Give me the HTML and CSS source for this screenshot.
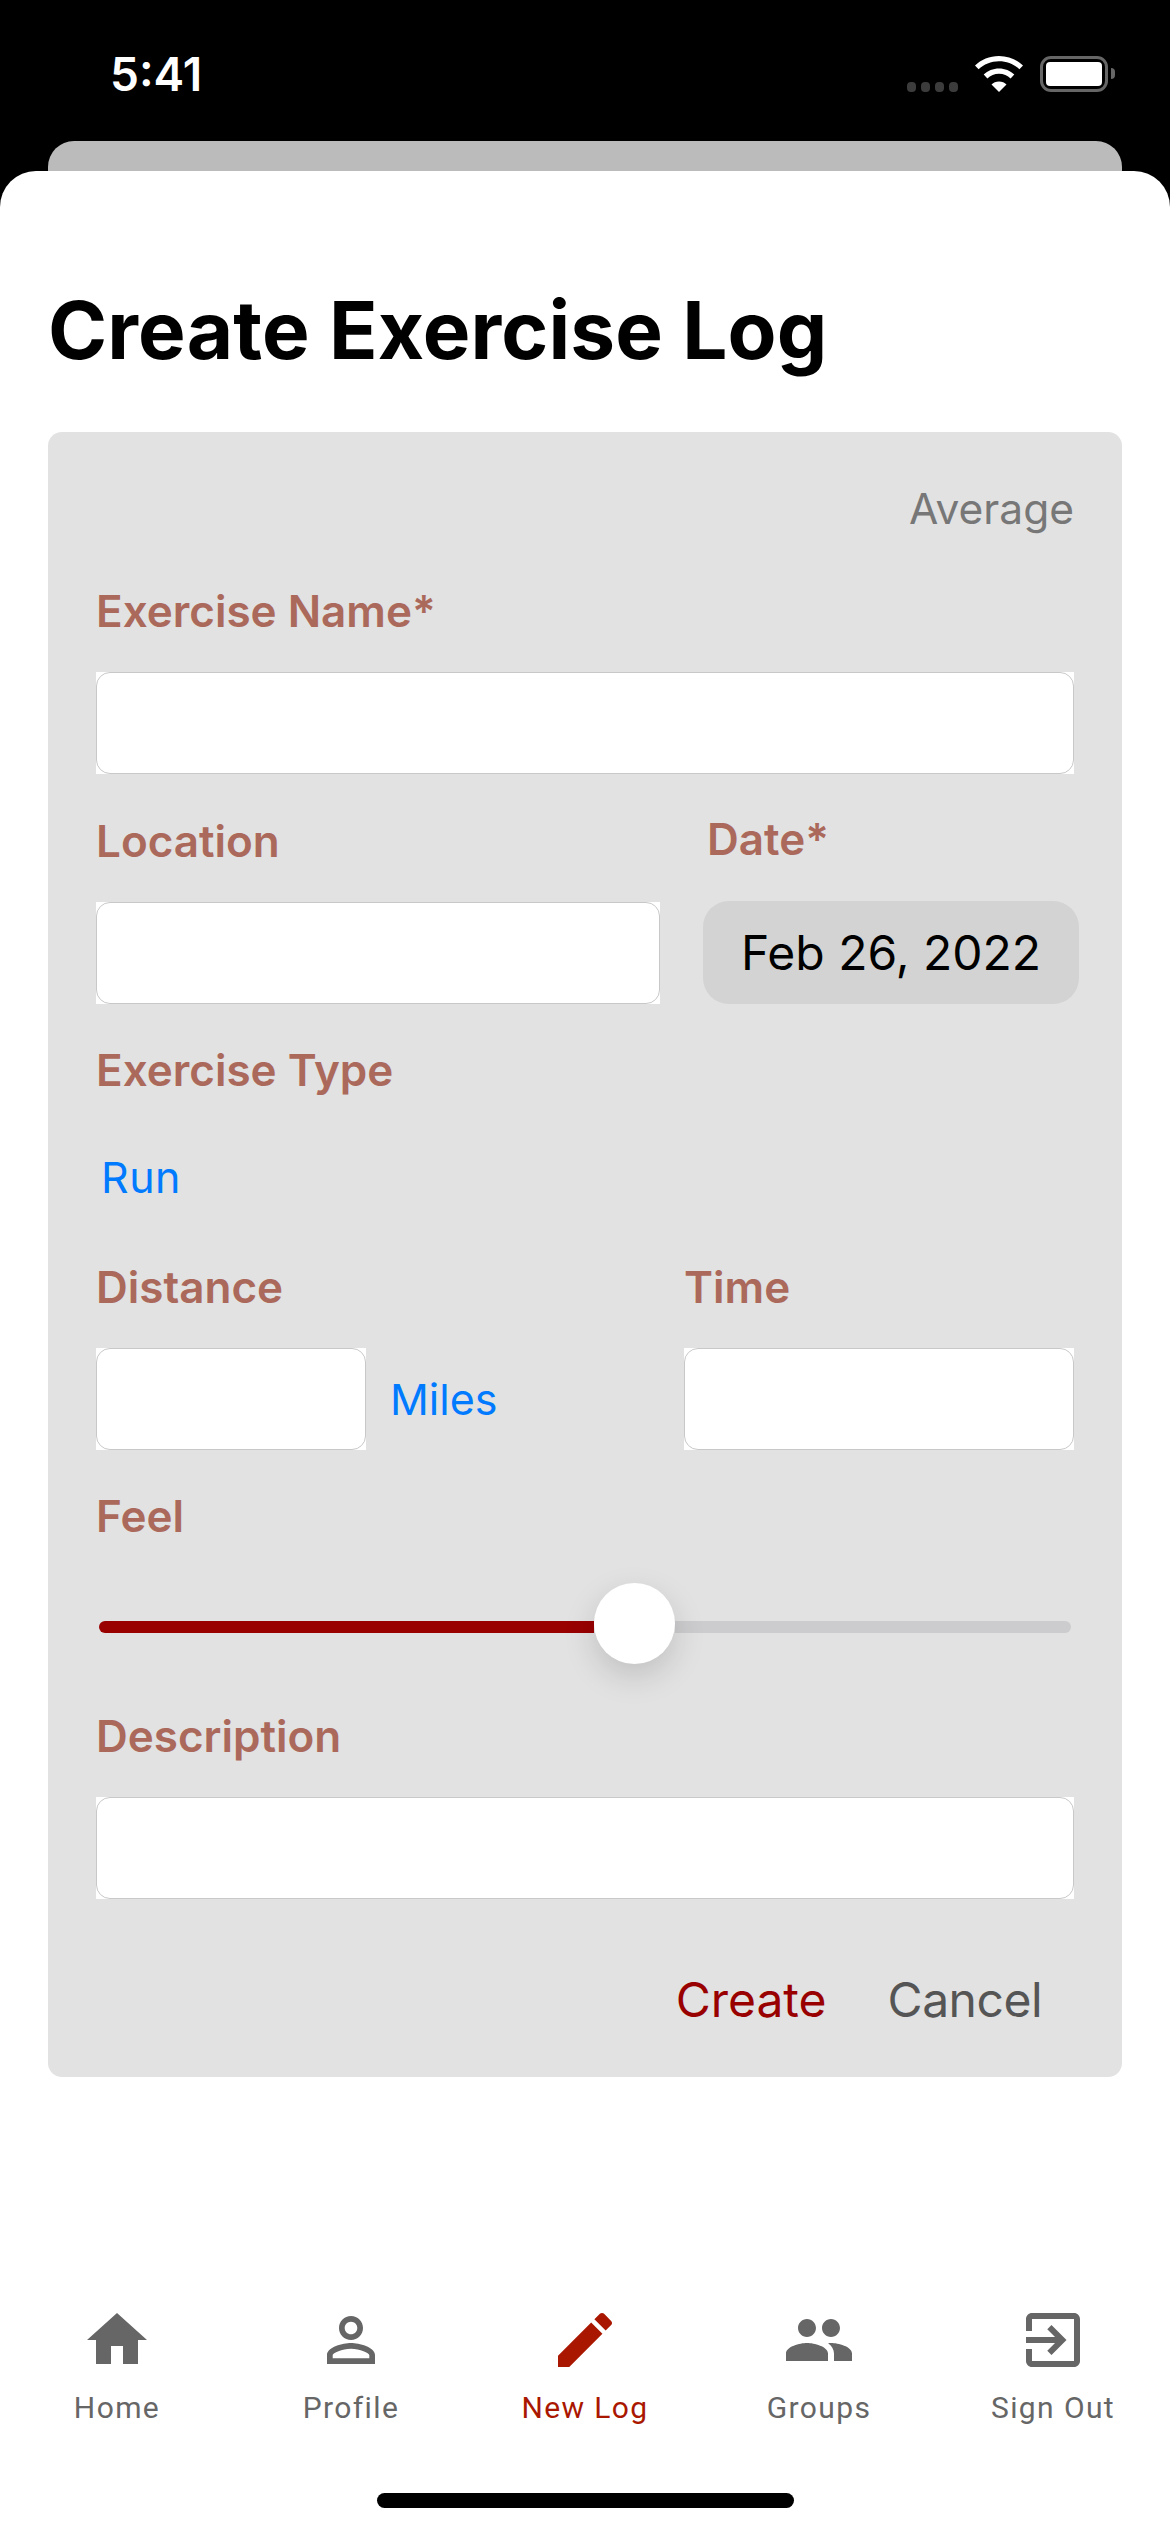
FILE: index.html
```html
<!DOCTYPE html>
<html>

<head>
    <meta charset="UTF-8">
    <title>Create Exercise Log</title>
    <link rel="stylesheet" href="styles.css">
</head>

<body>
    <div class="statusBar">
        <span class="clock">5:41</span>
        <div class="statusIcons">
            <div class="signal"><i></i><i></i><i></i><i></i></div>
            <svg class="wifi" width="48" height="36" viewBox="0 0 48 36">
                <path fill="#fff" d="M24 25.5c3 0 5.6 1.1 7.500 2.900L24 36l-7.500-7.600c1.900-1.800 4.500-2.900 7.500-2.900z" />
                <path fill="#fff" d="M24 12.500c5.900 0 11.300 2.300 15.300 6.100l-3.700 3.800c-3-2.800-7.100-4.600-11.600-4.600s-8.600 1.800-11.600 4.600l-3.700-3.800c4-3.800 9.400-6.100 15.300-6.100z" />
                <path fill="#fff" d="M24 0c9.500 0 18 3.700 24 9.600l-3.600 3.700C39.200 8.300 32 5.200 24 5.200S8.800 8.300 3.600 13.300L0 9.600C6 3.700 14.500 0 24 0z" />
            </svg>
            <div class="battery">
                <div class="batteryLevel"></div>
            </div>
            <div class="batteryCap"></div>
        </div>
    </div>

    <div class="backSheet"></div>

    <div class="sheet">
        <h1 class="title">Create Exercise Log</h1>

        <form class="card">
            <div class="average">Average</div>

            <div class="nameField">
                <label class="label">Exercise Name*</label>
                <div class="input"><div class="inputBorder"></div></div>
            </div>

            <div class="row locationRow">
                <div class="locationCol">
                    <label class="label">Location</label>
                    <div class="input"><div class="inputBorder"></div></div>
                </div>
                <div class="dateCol">
                    <label class="label dateLabel">Date*</label>
                    <div class="datePill">Feb 26, 2022</div>
                </div>
            </div>

            <div class="typeField">
                <label class="label">Exercise Type</label>
                <div class="typeValue link">Run</div>
            </div>

            <div class="row distanceRow">
                <div class="distanceCol">
                    <label class="label">Distance</label>
                    <div class="distanceInputs">
                        <div class="input"><div class="inputBorder"></div></div>
                        <span class="link">Miles</span>
                    </div>
                </div>
                <div class="timeCol">
                    <label class="label">Time</label>
                    <div class="input"><div class="inputBorder"></div></div>
                </div>
            </div>

            <div class="feelField">
                <label class="label feelLabel">Feel</label>
                <div class="slider">
                    <div class="sliderFill"></div>
                    <div class="sliderThumb"></div>
                    <div class="sliderRest"></div>
                </div>
            </div>

            <div class="descriptionField">
                <label class="label">Description</label>
                <div class="input"><div class="inputBorder"></div></div>
            </div>

            <div class="actions">
                <span class="create">Create</span>
                <span class="cancel">Cancel</span>
            </div>
        </form>

        <nav class="tabBar">
            <div class="tab">
                <svg class="tabIcon" width="72" height="72" viewBox="0 0 24 24"><path d="M10 20v-6h4v6h5v-8h3L12 3 2 12h3v8z" /></svg>
                <span>Home</span>
            </div>
            <div class="tab">
                <svg class="tabIcon" width="72" height="72" viewBox="0 0 24 24"><path d="M12 5.900c1.160 0 2.100.94 2.100 2.100s-.94 2.100-2.100 2.100S9.900 9.160 9.900 8s.94-2.100 2.100-2.100m0 9c2.970 0 6.100 1.460 6.100 2.100v1.100H5.900V17c0-.64 3.130-2.100 6.100-2.100M12 4C9.790 4 8 5.790 8 8s1.790 4 4 4 4-1.790 4-4-1.790-4-4-4zm0 9c-2.670 0-8 1.340-8 4v3h16v-3c0-2.660-5.330-4-8-4z" /></svg>
                <span>Profile</span>
            </div>
            <div class="tab active">
                <svg class="tabIcon" width="72" height="72" viewBox="0 0 24 24"><path d="M3 17.250V21h3.750L17.810 9.940l-3.750-3.750L3 17.250zM20.710 7.040c.39-.39.39-1.020 0-1.410l-2.340-2.340c-.39-.39-1.020-.39-1.410 0l-1.830 1.830 3.750 3.750 1.830-1.830z" /></svg>
                <span>New Log</span>
            </div>
            <div class="tab">
                <svg class="tabIcon" width="72" height="72" viewBox="0 0 24 24"><path d="M16 11c1.660 0 2.990-1.340 2.990-3S17.660 5 16 5s-3 1.340-3 3 1.340 3 3 3zm-8 0c1.660 0 2.990-1.340 2.990-3S9.660 5 8 5 5 6.340 5 8s1.340 3 3 3zm0 2c-2.330 0-7 1.170-7 3.500V19h14v-2.500c0-2.330-4.670-3.500-7-3.500zm8 0c-.29 0-.62.020-.97.050 1.160.84 1.970 1.970 1.970 3.450V19h6v-2.500c0-2.330-4.670-3.500-7-3.500z" /></svg>
                <span>Groups</span>
            </div>
            <div class="tab">
                <svg class="tabIcon" width="72" height="72" viewBox="0 0 24 24"><path d="M10.090 15.590 11.500 17l5-5-5-5-1.410 1.410L12.670 11H3v2h9.670l-2.580 2.590zM19 3H5c-1.110 0-2 .9-2 2v4h2V5h14v14H5v-4H3v4c0 1.100.89 2 2 2h14c1.100 0 2-.9 2-2V5c0-1.100-.9-2-2-2z" /></svg>
                <span>Sign Out</span>
            </div>
        </nav>

        <div class="homeBar"></div>
    </div>
</body>

</html>
```

FILE: styles.css
```css
html, body {
    margin: 0;
    padding: 0;
}

body {
    width: 1170px;
    height: 2532px;
    overflow: hidden;
    background-color: #000;
    font-family: Inter, "Liberation Sans", sans-serif;
    display: flex;
    flex-direction: column;
}

.statusBar {
    height: 141px;
    flex-shrink: 0;
    box-sizing: border-box;
    padding: 50px 55px 0 110px;
    display: flex;
    justify-content: space-between;
    align-items: flex-start;
    color: #fff;
}

.clock {
    font-size: 46px;
    line-height: 48px;
    font-weight: 600;
}

.statusIcons {
    display: flex;
    align-items: flex-start;
    margin-top: 6px;
}

.signal {
    display: flex;
    gap: 5px;
    margin-top: 26px;
    margin-right: 17px;
}

.signal i {
    width: 9px;
    height: 10px;
    border-radius: 4px;
    background-color: #3c3c3c;
}

.wifi {
    margin-right: 17px;
}

.battery {
    box-sizing: border-box;
    width: 68px;
    height: 36px;
    padding: 3px;
    border: 3px solid #666;
    border-radius: 11px;
}

.batteryLevel {
    height: 100%;
    background-color: #fff;
    border-radius: 4px;
}

.batteryCap {
    width: 4px;
    height: 11px;
    margin: 12px 0 0 3px;
    background-color: #666;
    border-radius: 0 5px 5px 0;
}

.backSheet {
    height: 30px;
    flex-shrink: 0;
    margin: 0 48px;
    background-color: #bbb;
    border-radius: 26px 26px 0 0;
}

.sheet {
    flex: 1;
    background-color: #fff;
    border-radius: 36px 36px 0 0;
    display: flex;
    flex-direction: column;
}

.title {
    margin: 109px 0 0 48px;
    font-size: 80px;
    line-height: 100px;
    font-weight: 700;
    letter-spacing: 0.16px;
    color: #000;
}

.card {
    margin: 52px 48px 0;
    padding: 52px 48px 48px;
    background-color: #e2e2e2;
    border-radius: 14px;
}

.average {
    text-align: right;
    font-size: 42.5px;
    line-height: 50px;
    color: #777;
}

.label {
    display: block;
    font-weight: 600;
    font-size: 44px;
    line-height: 54px;
    margin-bottom: 34px;
    color: #ab695b;
}

.nameField {
    margin-top: 50px;
}

.input {
    height: 102px;
    background-color: #fff;
}

.inputBorder {
    height: 100%;
    box-sizing: border-box;
    border: 1px solid #c8c8c8;
    border-radius: 14px;
}

.link {
    font-size: 43px;
    line-height: 50px;
    color: #007aff;
}

.row {
    display: flex;
}

.locationRow {
    margin-top: 40px;
}

.locationCol {
    width: 564px;
    flex-shrink: 0;
}

.dateCol {
    margin-left: 43px;
    flex-shrink: 0;
}

.dateLabel {
    margin: -2px 0 35px 4px;
}

.datePill {
    width: 376px;
    height: 103px;
    border-radius: 26px;
    background-color: #d3d3d3;
    font-size: 48px;
    line-height: 103px;
    text-align: center;
    color: #000;
}

.typeField {
    margin-top: 39px;
}

.typeField .label {
    margin-bottom: 55px;
}

.typeValue {
    margin-left: 5px;
    letter-spacing: 0.5px;
}

.distanceRow {
    margin-top: 58px;
}

.distanceCol {
    width: 588px;
}

.distanceInputs {
    display: flex;
    align-items: center;
    gap: 24px;
}

.distanceInputs .input {
    width: 270px;
}

.timeCol {
    width: 390px;
}

.feelField {
    margin-top: 39px;
}

.feelLabel {
    margin-bottom: 40px;
}

.slider {
    display: flex;
    align-items: flex-start;
    height: 82px;
    margin: 0 3px;
}

.sliderFill {
    width: 495px;
    height: 12px;
    margin-top: 38px;
    background-color: #990000;
    border-radius: 6px 0 0 6px;
}

.sliderThumb {
    width: 81px;
    height: 81px;
    flex-shrink: 0;
    border-radius: 50%;
    background-color: #fff;
    box-shadow: 0 12px 32px rgba(0, 0, 0, 0.15);
    z-index: 1;
}

.sliderRest {
    flex: 1;
    height: 12px;
    margin-top: 38px;
    background-color: #ccccce;
    border-radius: 0 6px 6px 0;
}

.descriptionField {
    margin-top: 44px;
}

.actions {
    display: flex;
    justify-content: flex-end;
    gap: 61px;
    padding-right: 32px;
    margin-top: 72px;
    font-size: 48px;
    line-height: 58px;
}

.create {
    color: #990000;
}

.cancel {
    color: #555;
    letter-spacing: -0.5px;
}

.tabBar {
    display: flex;
    margin-top: 227px;
}

.tab {
    flex: 1;
    display: flex;
    flex-direction: column;
    align-items: center;
    font-family: Roboto, sans-serif;
    font-size: 30px;
    line-height: 36px;
    letter-spacing: 1.4px;
    color: #666;
}

.tabIcon {
    fill: #666;
    margin-bottom: 14px;
}

.active {
    color: #aa1700;
}

.active .tabIcon {
    fill: #aa1700;
}

.homeBar {
    width: 417px;
    height: 15px;
    margin: 67px auto 0;
    background-color: #000;
    border-radius: 8px;
}
```
